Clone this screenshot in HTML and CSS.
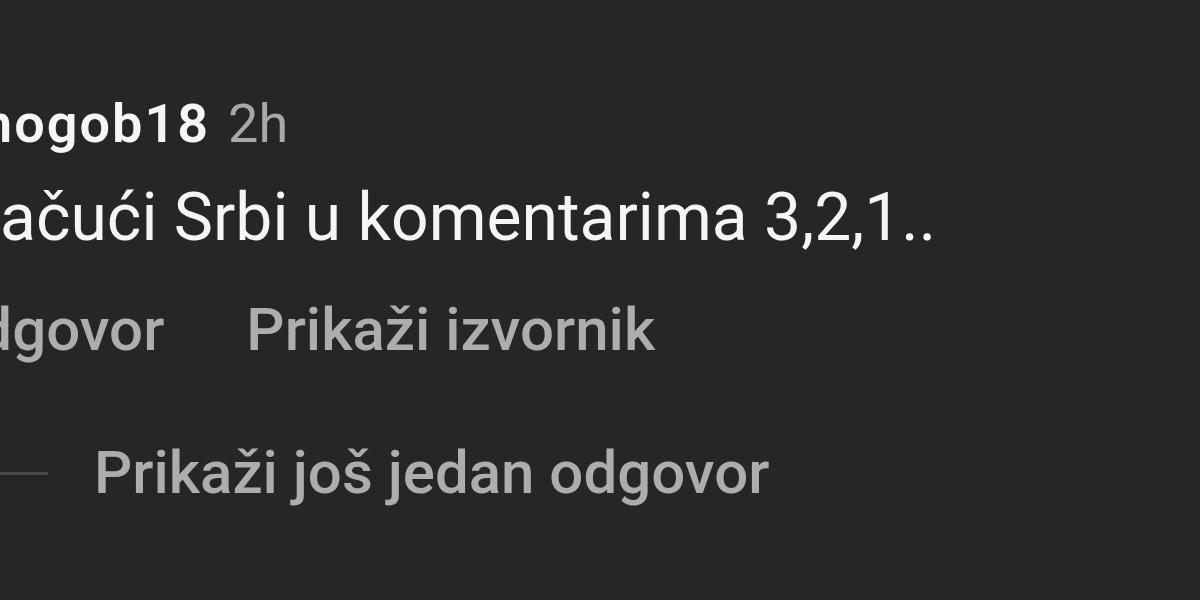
FILE: index.html
```html
<!DOCTYPE html>
<html lang="hr">
<head>
  <meta charset="UTF-8" />
  <meta name="viewport" content="width=device-width, initial-scale=1.0" />
  <title>Komentar</title>
  <link rel="stylesheet" href="styles.css">
</head>
<body>
  <div class="comment">
    <div class="comment-head">
      <span class="username">nogob18</span>
      <span class="time">2h</span>
    </div>
    <p class="comment-text">ačući Srbi u komentarima 3,2,1..</p>
    <div class="comment-actions">
      <span class="action action-reply">Odgovor</span>
      <span class="action">Prikaži izvornik</span>
    </div>
    <div class="more-replies">
      <span class="more-line"></span>
      <span class="action">Prikaži još jedan odgovor</span>
    </div>
  </div>
</body>
</html>
```

FILE: styles.css
```css
html, body {
  margin: 0;
  padding: 0;
  height: 100vh;
  overflow: hidden;
  background: #262626;
  font-family: Roboto, "Liberation Sans", sans-serif;
  color: #f5f5f5;
}

.comment {
  padding-top: 94px;
  display: flex;
  flex-direction: column;
}

.comment-head {
  display: flex;
  align-items: baseline;
  gap: 18px;
  margin-left: -18px;
  font-size: 54px;
  line-height: 60px;
}

.username {
  font-weight: 600;
  letter-spacing: 2px;
}

.time {
  color: #a8a8a8;
}

.comment-text {
  margin: 0;
  margin-top: 28px;
  font-size: 66px;
  line-height: 72px;
}

.comment-actions {
  display: flex;
  gap: 82px;
  margin-top: 44px;
  font-size: 60px;
  line-height: 64px;
}

.action {
  color: #adadad;
  font-weight: 500;
}

.action-reply {
  margin-left: -63px;
}

.more-replies {
  display: flex;
  align-items: center;
  gap: 46px;
  margin-top: 79px;
  font-size: 60px;
  line-height: 64px;
}

.more-line {
  width: 48px;
  height: 3px;
  background: #4a4a4a;
}
```
